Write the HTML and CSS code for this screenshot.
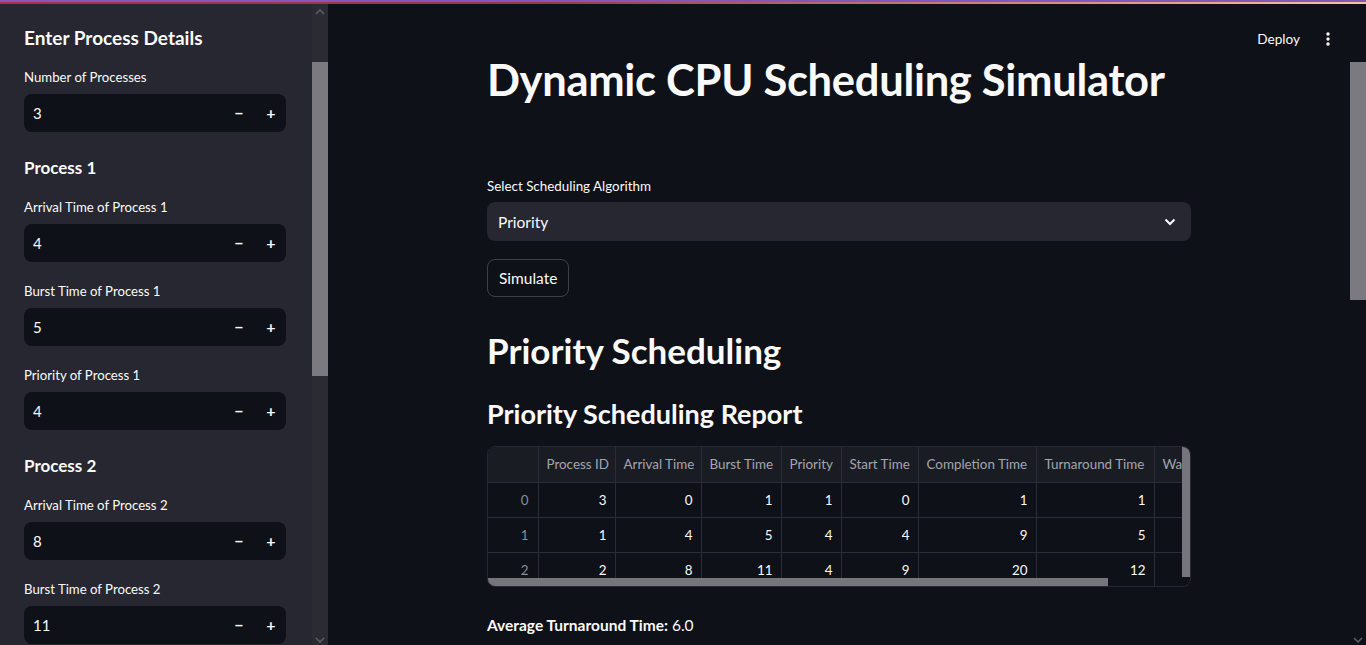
FILE: index.html
```html
<!DOCTYPE html>
<html lang="en">
<head>
<meta charset="utf-8">
<title>Dynamic CPU Scheduling Simulator</title>
<link rel="stylesheet" href="styles.css">
</head>
<body>
<div class="deco"><div class="deco-top"></div><div class="deco-bottom"></div></div>
<div class="app">
  <aside class="sidebar">
    <div class="side-content">
      <h2 class="side-title">Enter Process Details</h2>
      <div class="field">
        <label>Number of Processes</label>
        <div class="num"><span class="val">3</span><span class="btns"><span class="minus">−</span><span class="plus">+</span></span></div>
      </div>
      <h3 class="side-sub">Process 1</h3>
      <div class="field">
        <label>Arrival Time of Process 1</label>
        <div class="num"><span class="val">4</span><span class="btns"><span class="minus">−</span><span class="plus">+</span></span></div>
      </div>
      <div class="field">
        <label>Burst Time of Process 1</label>
        <div class="num"><span class="val">5</span><span class="btns"><span class="minus">−</span><span class="plus">+</span></span></div>
      </div>
      <div class="field">
        <label>Priority of Process 1</label>
        <div class="num"><span class="val">4</span><span class="btns"><span class="minus">−</span><span class="plus">+</span></span></div>
      </div>
      <h3 class="side-sub">Process 2</h3>
      <div class="field">
        <label>Arrival Time of Process 2</label>
        <div class="num"><span class="val">8</span><span class="btns"><span class="minus">−</span><span class="plus">+</span></span></div>
      </div>
      <div class="field">
        <label>Burst Time of Process 2</label>
        <div class="num"><span class="val">11</span><span class="btns"><span class="minus">−</span><span class="plus">+</span></span></div>
      </div>
    </div>
    <div class="side-track">
      <svg class="arrow" width="10" height="6" viewBox="0 0 10 6"><path d="M1 5 L5 1 L9 5" fill="none" stroke="#5b5c66" stroke-width="1.6"/></svg>
      <div class="side-thumb"></div>
      <div class="spacer"></div>
      <svg class="arrow" width="10" height="6" viewBox="0 0 10 6"><path d="M1 1 L5 5 L9 1" fill="none" stroke="#5b5c66" stroke-width="1.6"/></svg>
    </div>
  </aside>
  <main class="main">
    <header class="topbar">
      <span class="deploy">Deploy</span>
      <svg class="kebab" width="4" height="14" viewBox="0 0 4 14"><circle cx="2" cy="2" r="1.7" fill="#fafafa"/><circle cx="2" cy="7" r="1.7" fill="#fafafa"/><circle cx="2" cy="12" r="1.7" fill="#fafafa"/></svg>
    </header>
    <div class="main-row">
      <div class="content">
        <div class="block">
          <h1 class="title">Dynamic CPU Scheduling Simulator</h1>
          <label class="sel-label">Select Scheduling Algorithm</label>
          <div class="select">
            <span>Priority</span>
            <svg width="12" height="8" viewBox="0 0 12 8"><path d="M1.5 1.5 L6 6 L10.5 1.5" fill="none" stroke="#fafafa" stroke-width="2"/></svg>
          </div>
          <button class="btn">Simulate</button>
          <h2 class="h2">Priority Scheduling</h2>
          <h3 class="h3">Priority Scheduling Report</h3>
          <div class="table-wrap">
            <div class="table-inner">
              <table class="df">
                <thead>
                  <tr><th class="idx"></th><th class="c1">Process ID</th><th class="c2">Arrival Time</th><th class="c3">Burst Time</th><th class="c4">Priority</th><th class="c5">Start Time</th><th class="c6">Completion Time</th><th class="c7">Turnaround Time</th><th class="c8">Waiting Time</th></tr>
                </thead>
                <tbody>
                  <tr><td class="idx">0</td><td>3</td><td>0</td><td>1</td><td>1</td><td>0</td><td>1</td><td>1</td><td>0</td></tr>
                  <tr><td class="idx">1</td><td>1</td><td>4</td><td>5</td><td>4</td><td>4</td><td>9</td><td>5</td><td>0</td></tr>
                  <tr><td class="idx">2</td><td>2</td><td>8</td><td>11</td><td>4</td><td>9</td><td>20</td><td>12</td><td>1</td></tr>
                </tbody>
              </table>
            </div>
            <div class="vbar"></div>
            <div class="hbar"></div>
          </div>
          <p class="avg"><strong>Average Turnaround Time:</strong> 6.0</p>
        </div>
      </div>
      <div class="main-track">
        <div class="main-thumb"></div>
        <div class="spacer"></div>
        <svg class="arrow" width="10" height="6" viewBox="0 0 10 6"><path d="M1 1 L5 5 L9 1" fill="none" stroke="#5b5c66" stroke-width="1.6"/></svg>
      </div>
    </div>
  </main>
</div>
</body>
</html>
```
FILE: styles.css
```css
* { box-sizing: border-box; }
html, body { margin: 0; padding: 0; height: 100%; }
body {
  background: #0e1117;
  color: #fafafa;
  font-family: "Source Sans Pro", "Lato", "Noto Sans", sans-serif;
  overflow: hidden;
  display: flex;
  flex-direction: column;
}
.deco { flex: none; }
.deco-top { height: 2px; background: #8457b8; }
.deco-bottom { height: 2px; background: linear-gradient(90deg, #b32a4a, #9a3a3c 40%, #f2c89a 100%); }
.app { flex: 1; display: flex; min-height: 0; }

.sidebar { width: 328px; flex: none; display: flex; background: #262730; }
.side-content { width: 312px; padding: 22px 26px 0 24px; overflow: hidden; }
.side-track { width: 16px; background: #2a2b33; display: flex; flex-direction: column; align-items: center; padding: 5px 0 2px; }
.side-thumb { width: 16px; height: 314px; background: #7a7a80; margin-top: 47px; }
.spacer { flex: 1; }
.arrow { display: block; }

.side-title { font-size: 19px; font-weight: 700; margin: 0 0 18px; line-height: 24px; }
.side-sub { font-size: 17px; font-weight: 700; margin: 25px 0 19px; line-height: 22px; }
.field { margin-bottom: 20px; }
.field label { display: block; font-size: 13.2px; line-height: 18px; margin-bottom: 8px; color: #fafafa; }
.num {
  height: 38px; background: #0e1117; border-radius: 8px;
  display: flex; align-items: center; justify-content: space-between;
  padding: 0 8px 0 9px; font-size: 15px;
}
.btns { display: flex; gap: 18px; font-size: 16px; font-weight: 700; line-height: 16px; }
.btns span { width: 14px; text-align: center; }

.main { flex: 1; display: flex; flex-direction: column; min-width: 0; }
.topbar { height: 51px; flex: none; display: flex; align-items: flex-start; justify-content: flex-end; padding: 27px 36px 0 0; gap: 26px; }
.deploy { font-size: 13.6px; line-height: 17px; color: #fafafa; }
.kebab { display: block; margin-top: 1px; }
.main-row { flex: 1; display: flex; min-height: 0; }
.content { flex: 1; display: flex; justify-content: center; overflow: hidden; }
.main-track { width: 16px; flex: none; display: flex; flex-direction: column; align-items: center; padding: 2px 0 2px; }
.main-thumb { width: 16px; height: 238px; background: #7a7a80; margin-top: 5px; }

.block { width: 704px; }
.title { font-size: 43.5px; font-weight: 700; margin: 0; line-height: 48px; letter-spacing: -0.3px; white-space: nowrap; }
.sel-label { display: block; font-size: 13.4px; margin-top: 74px; line-height: 18px; }
.select {
  margin-top: 7px; height: 39px; background: #262730; border-radius: 8px;
  display: flex; align-items: center; justify-content: space-between; padding: 0 15px 0 11px; font-size: 15.5px;
}
.btn {
  margin-top: 18px; height: 38px; padding: 0 11px; background: transparent; color: #fafafa;
  border: 1px solid rgba(250,250,250,0.2); border-radius: 8px; font-family: inherit; font-size: 15.5px; display: block;
}
.h2 { font-size: 35px; font-weight: 700; margin: 31px 0 0; line-height: 44px; }
.h3 { font-size: 27px; font-weight: 700; margin: 25px 0 0; line-height: 34px; }

.table-wrap {
  position: relative; margin-top: 15px; height: 141px; border: 1px solid #262730; border-radius: 8px; overflow: hidden;
}
.table-inner { overflow: hidden; height: 100%; }
.df { border-collapse: collapse; font-size: 13.4px; white-space: nowrap; table-layout: fixed; width: 766px; }
.df th, .df td { height: 35px; border: 1px solid #2b2d36; padding: 0 8px; overflow: hidden; }
.df tr > :first-child { border-left: none; }
.df thead th { border-top: none; background: #1a1c24; color: #a3a6ad; font-weight: 400; text-align: left; }
.df td { text-align: right; color: #fafafa; }
.df td.idx { color: #8b8e96; text-align: right; padding-right: 9px; }
.df .idx { width: 50px; }
.df .c1 { width: 77px; }
.df .c2 { width: 86px; }
.df .c3 { width: 80px; }
.df .c4 { width: 60px; }
.df .c5 { width: 77px; }
.df .c6 { width: 118px; }
.df .c7 { width: 118px; }
.df .c8 { width: 100px; }
.vbar { position: absolute; right: 0; top: 0; width: 8px; height: 130px; background: #74767c; border-radius: 0 6px 0 0; }
.hbar { position: absolute; left: 0; bottom: 0; width: 620px; height: 8px; background: #74767c; }
.avg { margin: 29px 0 0; font-size: 15.5px; }
.avg strong { font-weight: 700; }
```
